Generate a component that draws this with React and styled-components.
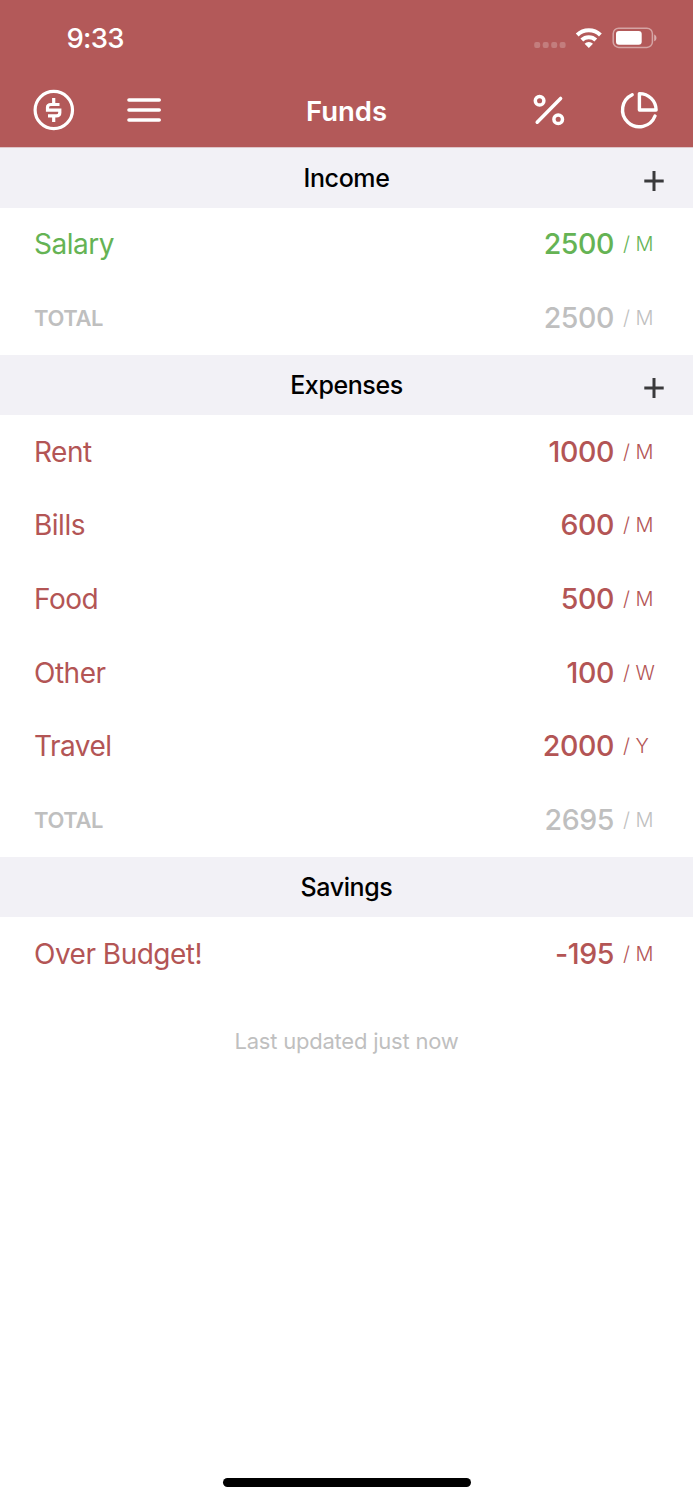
import React from 'react';
import styled, { createGlobalStyle } from 'styled-components';

const GlobalStyle = createGlobalStyle`
    body {
        margin: 0;
        background-color: #ffffff;
        font-family: Inter, 'Liberation Sans', sans-serif;
    }
`;

const colors = {
    green: '#65b354',
    red: '#b35555',
    grey: '#bfbfbf',
};

const Screen = styled.div`
    display: flex;
    flex-direction: column;
    width: 693px;
    height: 1500px;
    background-color: #ffffff;
    overflow: hidden;
`;

const Header = styled.header`
    box-sizing: border-box;
    height: 148px;
    background-color: #b35959;
    border-bottom: 1px solid #dfc6c9;
    color: #ffffff;
`;

const StatusBar = styled.div`
    display: flex;
    align-items: center;
    justify-content: space-between;
    height: 76px;
    padding: 0 36px 0 66.5px;
`;

const Clock = styled.span`
    font-size: 27.5px;
    font-weight: 550;
    line-height: 34px;
    letter-spacing: -0.7px;
`;

const NavBar = styled.nav`
    display: grid;
    grid-template-columns: 1fr auto 1fr;
    align-items: center;
    height: 68px;
    padding: 0 32px 0 33px;
`;

const NavGroup = styled.div`
    display: flex;
    align-items: center;
    justify-content: ${props => (props.$end ? 'flex-end' : 'flex-start')};
    gap: ${props => (props.$end ? '53px' : '51px')};
`;

const IconButton = styled.button`
    display: flex;
    padding: 0;
    border: none;
    background: transparent;
    color: inherit;
    cursor: pointer;
`;

const Title = styled.h1`
    margin: 0;
    padding: 1px 1px 0 0;
    font-size: 27.5px;
    font-weight: 600;
    line-height: 34px;
`;

const SectionHeader = styled.div`
    display: grid;
    grid-template-columns: 1fr auto 1fr;
    align-items: center;
    height: 60px;
    padding: 0 28px;
    background-color: #f2f1f6;
`;

const SectionTitle = styled.h2`
    grid-column: 2;
    margin: 0;
    font-size: 25px;
    font-weight: 500;
    line-height: 30px;
    letter-spacing: -0.4px;
    color: #000000;
`;

const AddButton = styled(IconButton)`
    justify-self: end;
    margin-top: 6px;
    color: #3a3a3c;
`;

const Rows = styled.div`
    display: flex;
    flex-direction: column;
`;

const Row = styled.div`
    box-sizing: border-box;
    display: flex;
    align-items: center;
    height: 73.67px;
    padding: 0 34px 1px;
    color: ${props => props.$color};
`;

const Name = styled.span`
    flex: 1;
    padding-top: ${props => (props.$total ? '1px' : '0')};
    font-size: ${props => (props.$total ? '22px' : '28px')};
    font-weight: ${props => (props.$total ? 600 : 400)};
    line-height: 36px;
    letter-spacing: ${props => (props.$total ? '-0.4px' : '-0.5px')};
`;

const Amount = styled.span`
    font-size: 28.5px;
    font-weight: ${props => (props.$total ? 480 : 530)};
    line-height: 36px;
    letter-spacing: -0.4px;
`;

const Period = styled.span`
    width: 36px;
    margin-left: 9px;
    font-size: 20px;
    font-weight: 300;
    line-height: 36px;
    letter-spacing: -0.1px;
    white-space: nowrap;
`;

const Updated = styled.p`
    margin: 35px 0 0;
    font-size: 22px;
    line-height: 30px;
    letter-spacing: -0.22px;
    text-align: center;
    color: ${colors.grey};
`;

const HomeIndicator = styled.div`
    width: 248px;
    height: 9px;
    margin: auto auto 13px;
    border-radius: 5px;
    background-color: #000000;
`;

const StatusIcons = () => (
    <svg width="124" height="24" viewBox="533 26 124 24" fill="none">
        <g fill="#fff" fillOpacity="0.22">
            <rect x="534.2" y="42" width="6" height="6" rx="2" />
            <rect x="542.7" y="42" width="6" height="6" rx="2" />
            <rect x="551.2" y="42" width="6" height="6" rx="2" />
            <rect x="559.6" y="42" width="6" height="6" rx="2" />
        </g>
        <g stroke="#fff" strokeWidth="4">
            <path d="M577.2 35a16.6 16.6 0 0 1 23.2 0" />
            <path d="M581.8 40a10 10 0 0 1 14 0" />
        </g>
        <path d="M588.8 48l-4.2-4.2a6 6 0 0 1 8.4 0z" fill="#fff" />
        <rect x="613.2" y="28.2" width="39.2" height="19.2" rx="5.5" stroke="#fff" strokeOpacity="0.45" strokeWidth="1.5" />
        <rect x="616" y="31" width="25.7" height="13.7" rx="3" fill="#fff" />
        <path d="M654.2 34.5c3 1.2 3 5.6 0 6.8z" fill="#fff" fillOpacity="0.5" />
    </svg>
);

const DollarIcon = () => (
    <svg width="42" height="42" viewBox="33 89 42 42" fill="none" stroke="currentColor" strokeWidth="3.2">
        <circle cx="53.8" cy="110" r="18.7" />
        <path d="M53.7 98v6M53.7 116v6M59.5 104.5H51q-3.5 0-3.5 3v2.7H59.8v2.5q0 3.2-3.5 3.2H48" />
    </svg>
);

const MenuIcon = () => (
    <svg width="36" height="42" viewBox="126 89 36 42" fill="none" stroke="currentColor" strokeWidth="3.6" strokeLinecap="round">
        <path d="M129 100h30.2M129 110h30.2M129 120h30.2" />
    </svg>
);

const PercentIcon = () => (
    <svg width="34" height="42" viewBox="532 89 34 42" fill="none" stroke="currentColor" strokeWidth="3.5" strokeLinecap="round">
        <circle cx="539.6" cy="100.8" r="4.3" />
        <circle cx="558.2" cy="119.2" r="4.3" />
        <path d="M537.2 122.2L560.6 98.4" />
    </svg>
);

const PieIcon = () => (
    <svg width="42" height="42" viewBox="619 89 42 42" fill="none" stroke="currentColor" strokeWidth="3.4" strokeLinecap="round" strokeLinejoin="round">
        <path d="M632.2 94.7A16.8 16.8 0 1 0 655 116" />
        <path d="M639.4 93.6V110H656.1A16.7 16.4 0 0 0 639.4 93.6z" />
    </svg>
);

const PlusIcon = () => (
    <svg width="22" height="22" viewBox="0 0 22 22" fill="none" stroke="currentColor" strokeWidth="3">
        <path d="M11 1v20M1.3 11h19.4" />
    </svg>
);

const sections = [
    {
        title: 'Income',
        canAdd: true,
        color: colors.green,
        items: [{ name: 'Salary', amount: 2500, period: 'M' }],
        total: 2500,
    },
    {
        title: 'Expenses',
        canAdd: true,
        color: colors.red,
        items: [
            { name: 'Rent', amount: 1000, period: 'M' },
            { name: 'Bills', amount: 600, period: 'M' },
            { name: 'Food', amount: 500, period: 'M' },
            { name: 'Other', amount: 100, period: 'W' },
            { name: 'Travel', amount: 2000, period: 'Y' },
        ],
        total: 2695,
    },
    {
        title: 'Savings',
        color: colors.red,
        items: [{ name: 'Over Budget!', amount: -195, period: 'M' }],
    },
];

const FundRow = ({ name, amount, period, color, total }) => (
    <Row $color={color}>
        <Name $total={total}>{name}</Name>
        <Amount $total={total}>{amount}</Amount>
        <Period>/ {period}</Period>
    </Row>
);

const Section = ({ title, canAdd, color, items, total }) => (
    <section>
        <SectionHeader>
            <SectionTitle>{title}</SectionTitle>
            {canAdd && (
                <AddButton>
                    <PlusIcon />
                </AddButton>
            )}
        </SectionHeader>
        <Rows>
            {items.map(item => (
                <FundRow key={item.name} color={color} {...item} />
            ))}
            {total !== undefined && (
                <FundRow name="TOTAL" amount={total} period="M" color={colors.grey} total />
            )}
        </Rows>
    </section>
);

const App = () => (
    <Screen>
        <GlobalStyle />
        <Header>
            <StatusBar>
                <Clock>9:33</Clock>
                <StatusIcons />
            </StatusBar>
            <NavBar>
                <NavGroup>
                    <IconButton>
                        <DollarIcon />
                    </IconButton>
                    <IconButton>
                        <MenuIcon />
                    </IconButton>
                </NavGroup>
                <Title>Funds</Title>
                <NavGroup $end>
                    <IconButton>
                        <PercentIcon />
                    </IconButton>
                    <IconButton>
                        <PieIcon />
                    </IconButton>
                </NavGroup>
            </NavBar>
        </Header>
        {sections.map(section => (
            <Section key={section.title} {...section} />
        ))}
        <Updated>Last updated just now</Updated>
        <HomeIndicator />
    </Screen>
);

export default App;
